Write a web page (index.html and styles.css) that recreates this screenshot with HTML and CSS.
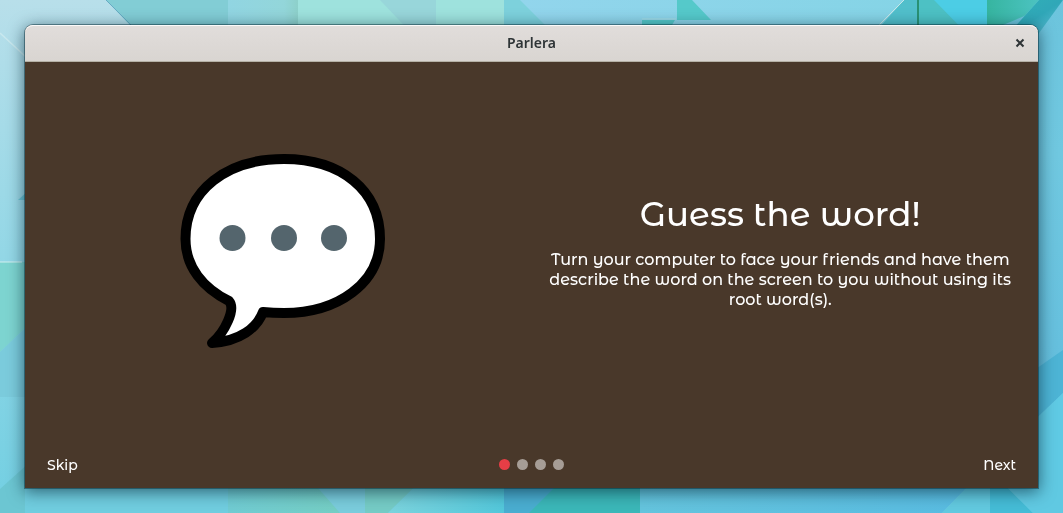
FILE: index.html
```html
<!DOCTYPE html>
<html lang="en">
<head>
<meta charset="utf-8">
<title>Parlera</title>
<link rel="stylesheet" href="styles.css">
</head>
<body class="desktop">
<svg class="wallpaper" viewBox="0 0 1063 513" preserveAspectRatio="none" aria-hidden="true">
  <defs>
    <linearGradient id="left" x2="0" y2="1"><stop offset="0" stop-color="#b8dfea"/><stop offset=".5" stop-color="#93d7e6"/><stop offset="1" stop-color="#72cfe2"/></linearGradient>
    <linearGradient id="mint"><stop offset="0" stop-color="#91d5e2"/><stop offset=".8" stop-color="#93d6da"/><stop offset="1" stop-color="#8dd0ca"/></linearGradient>
    <linearGradient id="sky"><stop offset="0" stop-color="#92d5ec"/><stop offset="1" stop-color="#85d4e6"/></linearGradient>
    <linearGradient id="teal"><stop offset="0" stop-color="#36b5a0"/><stop offset="1" stop-color="#4cc3c1"/></linearGradient>
    <linearGradient id="right" x2="0" y2="1"><stop offset="0" stop-color="#6cc4dd"/><stop offset=".3" stop-color="#70c8e0"/><stop offset="1" stop-color="#5db9dc"/></linearGradient>
    <linearGradient id="corner" x1="0" y1="0" x2="1" y2="1"><stop offset="0" stop-color="#31b2b7"/><stop offset=".5" stop-color="#30a7b8"/><stop offset="1" stop-color="#6cc4de"/></linearGradient>
    <linearGradient id="lowgreen"><stop offset="0" stop-color="#70cbd2"/><stop offset="1" stop-color="#76cfbd"/></linearGradient>
    <linearGradient id="lowblue"><stop offset="0" stop-color="#7bd3dd"/><stop offset="1" stop-color="#53c7da"/></linearGradient>
    <linearGradient id="lowright"><stop offset="0" stop-color="#64c4dd"/><stop offset="1" stop-color="#58bbe1"/></linearGradient>
  </defs>
  <path fill="url(#left)" d="M0 0h300v513H0z"/>
  <path stroke="#c9e8ee" stroke-width="1.5" d="M0 33L40 70"/>
  <path fill="#6bc5d6" d="M18 200l22-20v20z"/>
  <path fill="#7dd4d0" d="M0 262h40v52L0 352z"/>
  <path stroke="#d2eff0" d="M0 262h22"/>
  <path fill="#7bcbdc" d="M0 352l40-38v83H0z"/>
  <path fill="#6cc6d2" d="M0 489l40-36v60H0z"/>
  <path fill="#82cdd5" d="M106 0h122v40h-84z"/>
  <path stroke="#66abc4" fill="none" d="M106 0l36 36"/>
  <path fill="url(#mint)" d="M228 0h70v40h-70z"/>
  <path fill="#9ee2dd" d="M298 0h206v40H298z"/>
  <path fill="#98d6da" d="M380 0h56v40h-18z"/>
  <path fill="#7dd1dc" d="M504 0h20l40 40h-60z"/>
  <path fill="url(#sky)" d="M520 0h384l-32 40H560z"/>
  <path fill="#55c9ca" d="M642 20h33l-12 20h-21zM677 0h15l19 20h-34z"/>
  <path stroke="#a5dce4" d="M642 19h34"/>
  <path fill="#51bfcb" d="M904 0h14v40h-50z"/>
  <path fill="#4dc1c4" d="M918 0h18l40 40h-58z"/>
  <path stroke="#c9e7e8" d="M904 0l-32 32"/>
  <path stroke="#299174" stroke-width="2" d="M918 0v32"/>
  <path fill="#4ccde5" d="M934 0h53v40h-14z"/>
  <path fill="url(#teal)" d="M987 0h52l-36 40h-16z"/>
  <path fill="url(#right)" d="M1003 25l60-25v513h-43z"/>
  <path fill="url(#corner)" d="M1039 0h24L1034 40H1003z"/>
  <path fill="#4db4d5" d="M1020 380l43-30v43l-43 41z"/>
  <path fill="#5fcae4" d="M1020 434l43-41v120h-43z"/>
  <path fill="#70cddf" d="M25 470h203v43H25z"/>
  <path fill="url(#lowgreen)" d="M228 470h160v43H228z"/>
  <path fill="#7accdc" d="M302 470l38 43h25v-43z"/>
  <path fill="#75cbc5" d="M365 470h67l-44 43h-23z"/>
  <path fill="url(#lowblue)" d="M432 470h72v43H388z"/>
  <path fill="#4aadd0" d="M504 470h70l-44 43h-26z"/>
  <path fill="#3bb7b8" d="M572 470h68v43H529z"/>
  <path fill="url(#lowright)" d="M640 470h344l-42 43H640z"/>
  <path fill="#62c9df" d="M984 470h6v43h-48z"/>
  <path fill="#45bcd6" d="M990 470l43 43h-43z"/>
  <path fill="#60c9e2" d="M990 470h73v43h-30z"/>
</svg>
<main class="window">
  <header class="titlebar">
    <h1 class="titlebar-name">Parlera</h1>
    <button class="close" type="button" aria-label="Close">
      <svg class="close-icon" viewBox="0 0 10 10" aria-hidden="true"><path d="M1.500 1.500l7 7M8.500 1.500l-7 7"/></svg>
    </button>
  </header>
  <section class="slide">
    <div class="picture">
      <svg class="bubble" viewBox="180 153 206 196" role="img" aria-label="Speech bubble">
        <path class="bubble-shape" d="M284 159C341 159 380 190 380 239C380 283 338 313 284 313Q273 313 263 312C257 328 240 341 212 343C225 332 236 309 229 301C203 288 185.500 267 185.500 239C185.500 190 227 159 284 159Z"/>
        <g class="bubble-dots"><circle cx="232.500" cy="238" r="13"/><circle cx="284" cy="238" r="13"/><circle cx="334" cy="238" r="13"/></g>
      </svg>
    </div>
    <div class="copy">
      <h2 class="headline">Guess the word!</h2>
      <p class="description">Turn your computer to face your friends and have them describe the word on the screen to you without using its root word(s).</p>
    </div>
  </section>
  <footer class="controls">
    <button class="step" type="button">Skip</button>
    <nav class="pages" aria-label="Pages">
      <button class="page page-current" type="button" aria-label="Page 1" aria-current="step"></button>
      <button class="page" type="button" aria-label="Page 2"></button>
      <button class="page" type="button" aria-label="Page 3"></button>
      <button class="page" type="button" aria-label="Page 4"></button>
    </nav>
    <button class="step step-next" type="button">Next</button>
  </footer>
</main>
</body>
</html>
```
FILE: styles.css
```css
* { box-sizing: border-box; }

.desktop {
  margin: 0;
  min-height: 100vh;
  padding: 25px;
  display: flex;
  background: #72c9df;
  font-family: "Montserrat Alternates", Montserrat, Inter, sans-serif;
}

.wallpaper {
  position: fixed;
  inset: 0;
  width: 100%;
  height: 100%;
}

.window {
  position: relative;
  flex: 1;
  display: flex;
  flex-direction: column;
  background: #49382a;
  border-radius: 8px 8px 0 0;
  box-shadow: 0 0 0 1px rgba(0, 40, 50, 0.45), 0 3px 16px 1px rgba(0, 30, 45, 0.6);
  color: #fff;
}

.titlebar {
  display: grid;
  grid-template-columns: 36px 1fr 36px;
  align-items: center;
  height: 37px;
  border-bottom: 1px solid #b5b1a6;
  border-radius: 8px 8px 0 0;
  background: linear-gradient(#e1dddb, #d9d5d1);
  box-shadow: inset 0 1px #fbfafa;
  color: #2e3436;
}

.titlebar-name {
  grid-column: 2;
  margin: 0;
  text-align: center;
  font: 600 14px/20px "Noto Sans", sans-serif;
}

.close, .step, .page {
  padding: 0;
  border: 0;
  background: none;
  color: inherit;
  font: inherit;
}

.close {
  display: flex;
  align-items: center;
  justify-content: center;
  height: 36px;
}

.close-icon {
  width: 10px;
  height: 10px;
  fill: none;
  stroke: #2e3436;
  stroke-width: 2;
}

.slide {
  flex: 1;
  display: grid;
  grid-template-columns: 1fr 1fr;
  gap: 8px;
  align-items: center;
  padding: 0 13px;
}

.picture { display: flex; justify-content: center; }

.bubble { width: 206px; height: 196px; }

.bubble-shape {
  fill: #fff;
  stroke: #000;
  stroke-width: 10;
  stroke-linejoin: round;
}

.bubble-dots { fill: #54656d; }

.copy { text-align: center; }

.headline {
  margin: 0 0 14px;
  font-size: 34px;
  line-height: 44px;
  font-weight: 500;
}

.description {
  margin: 0;
  font-size: 16px;
  line-height: 20px;
  font-weight: 500;
}

.controls {
  display: grid;
  grid-template-columns: 1fr auto 1fr;
  align-items: center;
  height: 48px;
  padding: 0 22px;
}

.step {
  justify-self: start;
  padding-top: 2px;
  font-size: 14px;
  line-height: 20px;
  font-weight: 500;
}

.step-next { justify-self: end; }

.pages { display: flex; gap: 7px; }

.page {
  width: 11px;
  height: 11px;
  border-radius: 50%;
  background: #a69d96;
}

.page-current { background: #e63e46; }
```
